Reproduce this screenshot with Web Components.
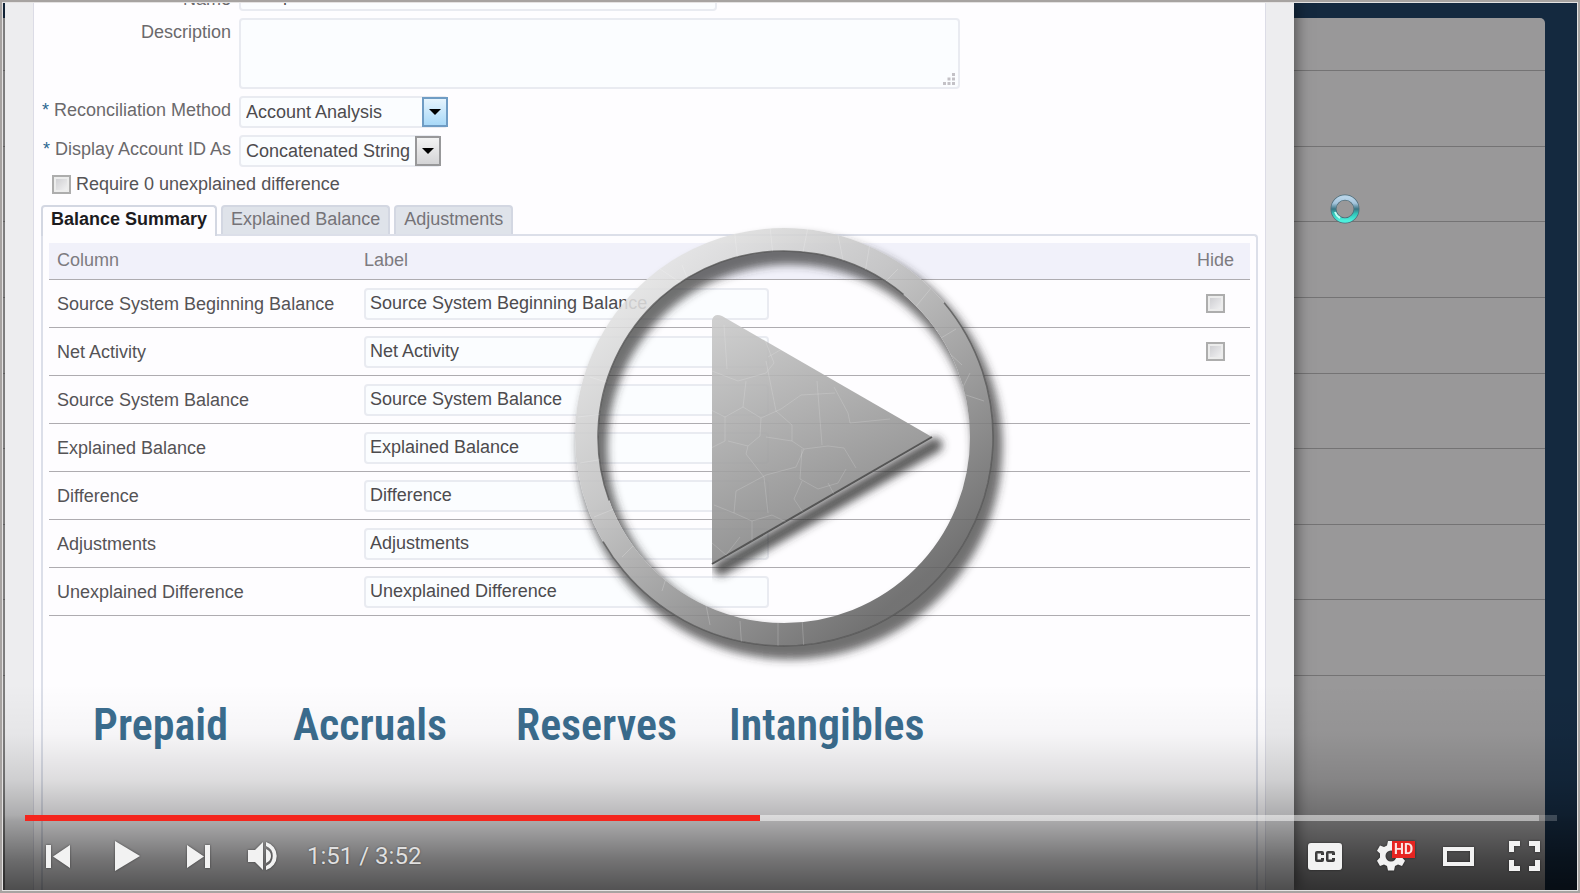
<!DOCTYPE html>
<html lang="en">
<head>
<meta charset="utf-8">
<title>Reconciliation formats</title>
<style>
	html,
	body {
		height: 100%;
		margin: 0;
	}
	body {
		font-family: "Liberation Sans", Arial, sans-serif;
		font-size: 18px;
		line-height: 20px;
		color: #555356;
	}
</style>
</head>
<body>
<video-player current="1:51" duration="3:52">
	<app-backdrop>
		<app-dialog>
			<format-form></format-form>
			<tab-panel tabs="Balance Summary|Explained Balance|Adjustments">
				<summary-table></summary-table>
				<caption-row>
					<span>Prepaid</span>
					<span>Accruals</span>
					<span>Reserves</span>
					<span>Intangibles</span>
				</caption-row>
			</tab-panel>
		</app-dialog>
	</app-backdrop>
</video-player>

<script>
const checkboxStyles = `
	input[type="checkbox"] {
		appearance: none;
		display: block;
		box-sizing: border-box;
		width: 19px;
		height: 19px;
		margin: 0;
		border: 2px solid #adadad;
		background: linear-gradient( 135deg, #c9c9cd, #f6f6f7 );
		box-shadow: inset 0 0 0 2px #ececec;
	}
`;

const fieldStyles = `
	input[type="text"],
	textarea,
	select {
		appearance: none;
		display: block;
		box-sizing: border-box;
		height: 32px;
		margin: 0;
		padding: 0 5px;
		border: 2px solid #e9ebf1;
		border-radius: 4px;
		background-color: #fbfdff;
		font: inherit;
		color: #4d4b4e;
		outline: 0;
	}
`;

class AppBackdrop extends HTMLElement {
	constructor() {
		super();
		this.attachShadow({ mode: "open" });
		this.shadowRoot.innerHTML = `
			<style>
				:host {
					display: grid;
					grid-template: minmax( 0, 1fr ) / minmax( 0, 1fr );
					height: 100%;
					overflow: hidden;
					background-color: #14293f;
				}
				.page,
				slot {
					grid-area: 1 / 1;
				}
				.page {
					margin: 15px 32px 0 0;
					border-radius: 0 5px 0 0;
					background-color: #999899;
				}
				.rows {
					display: grid;
					grid-template-rows: 53px repeat( 8, 1fr );
					height: 658px;
				}
				.rows div {
					border-bottom: 1px solid #747374;
				}
				slot {
					display: block;
					min-height: 0;
					margin: 0 283px 0 2px;
				}
				.busy {
					position: absolute;
					top: 191px;
					right: 217px;
					width: 32px;
					height: 32px;
				}
			</style>
			<div class="page"><div class="rows">${"<div></div>".repeat(9)}</div></div>
			<slot></slot>
			<svg class="busy" viewBox="0 0 32 32" fill="none">
				<defs>
					<linearGradient id="g" x1="0" y1="0" x2="0" y2="1">
						<stop offset="0" stop-color="#b8d4e8"/>
						<stop offset=".25" stop-color="#a5c4dc"/>
						<stop offset=".5" stop-color="#3a7484"/>
						<stop offset=".7" stop-color="#2fc4b8"/>
						<stop offset="1" stop-color="#4cf0dc"/>
					</linearGradient>
				</defs>
				<circle cx="16" cy="16" r="11.500" stroke="#4d6d7a" stroke-width="6"/>
				<circle cx="16" cy="16" r="11.500" stroke="url(#g)" stroke-width="4.500"/>
				<path d="M6 19a10.500 10.500 0 0 0 5 6" stroke="#c4fff4" stroke-width="2"/>
			</svg>
		`;
	}
}

class AppDialog extends HTMLElement {
	constructor() {
		super();
		this.attachShadow({ mode: "open" });
		this.shadowRoot.innerHTML = `
			<style>
				:host {
					display: block;
					box-sizing: border-box;
					height: 100%;
					padding: 0 28px;
					background-color: #ededef;
					box-shadow: 2px 0 14px rgba( 0,0,0,0.5 );
				}
				section {
					display: flex;
					flex-direction: column;
					box-sizing: border-box;
					height: 100%;
					padding: 0 7px;
					border: solid #dcdce6;
					border-width: 0 1px;
					background-color: #fefdff;
					overflow: hidden;
				}
			</style>
			<section><slot></slot></section>
		`;
	}
}

class FormatForm extends HTMLElement {
	constructor() {
		super();
		this.attachShadow({ mode: "open" });
		this.shadowRoot.innerHTML = `
			<style>
				${fieldStyles}
				${checkboxStyles}
				:host {
					display: block;
					flex: none;
					margin-top: -24px;
				}
				form {
					display: grid;
					grid-template-columns: 190px 1fr;
					gap: 7px 8px;
					justify-items: start;
				}
				form > label {
					justify-self: end;
					padding-top: 4px;
					color: #6b696c;
				}
				form > label:first-child {
					align-self: end;
					padding-bottom: 2px;
				}
				label b {
					color: #2c6790;
					font-weight: 400;
				}
				input[type="text"] {
					width: 478px;
				}
				.area,
				.combo {
					display: grid;
				}
				.area > *,
				.combo > * {
					grid-area: 1 / 1;
				}
				textarea {
					width: 721px;
					height: 71px;
					resize: none;
				}
				.area svg {
					place-self: end;
					width: 12px;
					height: 12px;
					margin: 0 5px 4px 0;
				}
				.combo span {
					display: grid;
					place-items: center;
					justify-self: end;
					box-sizing: border-box;
					width: 26px;
					margin: 1px 0;
					border: 2px solid #98989a;
					background: linear-gradient( #f3f3f3, #d4d4d6 );
					pointer-events: none;
				}
				.combo span::before {
					content: "";
					border: solid transparent;
					border-width: 6px 6px 0;
					border-top-color: #000;
				}
				.combo.hot span {
					border-color: #6f9cc4;
					background: linear-gradient( #e6f4fd, #a9d9f8 );
				}
				#method {
					width: 209px;
				}
				#display {
					width: 202px;
				}
				.check {
					grid-column: 1 / -1;
					display: flex;
					align-items: center;
					gap: 5px;
					padding-left: 11px;
				}
			</style>
			<form>
				<label for="name">Name</label>
				<input type="text" id="name" value="Sample">
				<label for="description">Description</label>
				<div class="area">
					<textarea id="description"></textarea>
					<svg viewBox="0 0 12 12" fill="#c3c1c6">
						<path d="M9 0h3v3H9zM9 4.500h3v3H9zM4.500 4.500h3v3h-3zM9 9h3v3H9zM4.500 9h3v3h-3zM0 9h3v3H0z"/>
					</svg>
				</div>
				<label for="method"><b>*</b> Reconciliation Method</label>
				<div class="combo hot">
					<select id="method"><option>Account Analysis</option></select>
					<span></span>
				</div>
				<label for="display"><b>*</b> Display Account ID As</label>
				<div class="combo">
					<select id="display"><option>Concatenated String</option></select>
					<span></span>
				</div>
				<div class="check">
					<input type="checkbox" id="require">
					<label for="require">Require 0 unexplained difference</label>
				</div>
			</form>
		`;
	}
}

class TabPanel extends HTMLElement {
	constructor() {
		super();
		this.attachShadow({ mode: "open" });
	}

	get tabs() {
		return this.getAttribute("tabs").split("|");
	}

	connectedCallback() {
		this.shadowRoot.innerHTML = `
			<style>
				:host {
					display: flex;
					flex-direction: column;
					flex: 1;
					min-height: 0;
					margin-top: 11px;
				}
				nav {
					display: flex;
					gap: 4px;
				}
				button {
					height: 29px;
					padding: 0 8px 4px;
					border: 2px solid #d3d7e2;
					border-bottom: 0;
					border-radius: 4px 4px 0 0;
					background-color: #dfe3ea;
					font: inherit;
					color: #757378;
				}
				button[aria-selected="true"] {
					z-index: 1;
					height: 31px;
					margin-bottom: -2px;
					padding-bottom: 6px;
					background-color: #fefdff;
					color: #1c1b1e;
					font-weight: 700;
				}
				.panel {
					flex: 1;
					padding: 7px 6px 0;
					border: 2px solid #dcdfe9;
					border-bottom: 0;
					border-radius: 0 4px 0 0;
				}
			</style>
			<nav role="tablist">
				${this.tabs.map((tab, i) => `<button role="tab" aria-selected="${i === 0}">${tab}</button>`).join("")}
			</nav>
			<div class="panel" role="tabpanel"><slot></slot></div>
		`;
	}
}

class SummaryTable extends HTMLElement {
	constructor() {
		super();
		this.attachShadow({ mode: "open" });

		const rows = [
			["Source System Beginning Balance", true],
			["Net Activity", true],
			["Source System Balance"],
			["Explained Balance"],
			["Difference"],
			["Adjustments"],
			["Unexplained Difference"],
		];

		this.shadowRoot.innerHTML = `
			<style>
				${fieldStyles}
				${checkboxStyles}
				:host {
					display: block;
				}
				table {
					width: 100%;
					border-spacing: 0;
					table-layout: fixed;
				}
				th,
				td {
					box-sizing: border-box;
					height: 48px;
					padding: 0 0 0 8px;
					border-bottom: 1px solid #aeacb0;
					text-align: left;
				}
				th {
					height: 37px;
					padding-bottom: 3px;
					background-color: #f1f1fa;
					font-weight: 400;
					color: #7d7b80;
				}
				th:first-child {
					width: 307px;
				}
				th:last-child {
					width: 66px;
					padding-right: 16px;
					text-align: right;
				}
				input[type="text"] {
					width: 405px;
					padding: 0 4px;
				}
				td:last-child {
					padding: 0 0 0 22px;
				}
			</style>
			<table>
				<thead>
					<tr><th>Column</th><th>Label</th><th>Hide</th></tr>
				</thead>
				<tbody>
					${rows.map(([name, hide]) => `
						<tr>
							<td>${name}</td>
							<td><input type="text" aria-label="${name} label" value="${name}"></td>
							<td>${hide ? `<input type="checkbox" aria-label="Hide ${name}">` : ""}</td>
						</tr>
					`).join("")}
				</tbody>
			</table>
		`;
	}
}

class CaptionRow extends HTMLElement {
	constructor() {
		super();
		this.attachShadow({ mode: "open" });
		this.shadowRoot.innerHTML = `
			<style>
				:host {
					display: grid;
					grid-template-columns: 200px 223px 213px auto;
					margin: 85px 0 0 44px;
					font: 600 44px/48px "Roboto Condensed", Roboto, sans-serif;
					color: #3b6d8f;
				}
			</style>
			<slot></slot>
		`;
	}
}

class PlayOverlay extends HTMLElement {
	constructor() {
		super();
		this.attachShadow({ mode: "open" });
		this.shadowRoot.innerHTML = `
			<style>
				:host {
					display: grid;
					place-items: center;
				}
				button {
					padding: 0;
					border: 0;
					background: none;
					cursor: pointer;
				}
				svg {
					display: block;
					width: 440px;
					height: 440px;
					overflow: visible;
				}
			</style>
			<button aria-label="Play video">
				<svg viewBox="0 0 440 440" fill="none">
					<defs>
						<linearGradient id="ring" x1=".15" y1=".1" x2=".8" y2=".9">
							<stop offset="0" stop-color="#e2e2e2"/>
							<stop offset=".35" stop-color="#c0c0c0"/>
							<stop offset="1" stop-color="#606060"/>
						</linearGradient>
						<linearGradient id="tri" gradientUnits="userSpaceOnUse" x1="145" y1="90" x2="245" y2="310">
							<stop offset="0" stop-color="#cbcbcb"/>
							<stop offset="1" stop-color="#858585"/>
						</linearGradient>
						<filter id="soft" filterUnits="userSpaceOnUse" x="-10" y="-10" width="460" height="460">
							<feGaussianBlur stdDeviation="4"/>
						</filter>
						<mask id="off-ring" maskUnits="userSpaceOnUse" x="-10" y="-10" width="460" height="460">
							<path fill="#fff" d="M-10-10h460v460H-10z"/>
							<circle cx="214" cy="210" r="197.500" stroke="#000" stroke-width="23"/>
						</mask>
						<mask id="off-tri" maskUnits="userSpaceOnUse" x="0" y="0" width="440" height="440">
							<path fill="#fff" d="M142 0h298v440H142z"/>
							<path fill="#000" d="M142 93q2-7 10-4l210 121-220 127z"/>
						</mask>
						<clipPath id="ring-clip">
							<path clip-rule="evenodd" d="M5 210a209 209 0 1 0 418 0a209 209 0 1 0-418 0M28 210a186 186 0 1 0 372 0a186 186 0 1 0-372 0"/>
						</clipPath>
						<clipPath id="tri-clip"><path d="M142 93q2-7 10-4l210 121-220 127z"/></clipPath>
					</defs>
					<g mask="url(#off-ring)">
						<circle cx="220" cy="220" r="197.500" stroke="#333" stroke-opacity=".7" stroke-width="30" filter="url(#soft)"/>
					</g>
					<circle cx="214" cy="210" r="197.500" stroke="url(#ring)" stroke-opacity=".88" stroke-width="23"/>
					<circle cx="214" cy="210" r="186" pathLength="360" stroke-dasharray="150 210" transform="rotate(160 214 210)" stroke="#555" stroke-opacity=".8" stroke-width="1.500"/>
					<circle cx="214" cy="210" r="209" pathLength="360" stroke-dasharray="190 170" transform="rotate(-40 214 210)" stroke="#555" stroke-opacity=".8" stroke-width="1.500"/>
					<g clip-path="url(#ring-clip)" stroke="#fff" stroke-opacity=".2">
						<path d="M164 0l4 36M200 0l3 28M238 0l-6 30M268 8l6 30M300 16l-6 36M112 38l12 30M90 42l30 20 40-14M328 42l-26 26M362 60l-28 34 34 10M386 102l-20 12 26 24M400 146l-10 20 24 8M20 150l32 10M8 190l34-4M10 236l36-6M24 290l30-12M52 330l30-30M92 364l10-32M140 398l-8-40M172 424l-2-30M208 424v-34M234 424l-2-34"/>
					</g>
					<g mask="url(#off-tri)">
						<path d="M151 341L365 218" stroke="#333" stroke-opacity=".8" stroke-width="15" stroke-linecap="round" filter="url(#soft)"/>
					</g>
					<path fill="url(#tri)" fill-opacity=".9" d="M142 93q2-7 10-4l210 121-220 127z"/>
					<path d="M142 337l220-127" stroke="#555" stroke-width="2"/>
					<g clip-path="url(#tri-clip)" stroke="#fff" stroke-opacity=".16">
						<path d="M154 98l3 44M142 144l26 10 28-8 8-10-14-36M198 130l14-8 20-20M196 134l10 50M176 154l-3 26-18 10-16-8M173 180l18 11 20-9 20-14 34-2M155 190v24l-20 10M191 191l-1 18-12 10-20-5M206 184l16 14v16l12 8 24-3 16 2 12 20M247 154l5 64M222 214l-26-4M234 222l-8 18-30 8-30 16-2 22-20-8M178 219l-2 8 18 23 4 36M232 222l-2 30 18 10 20-6 8-14M264 160l14 26 2 10 40-4M232 254l-8 18 16 24 12-6M258 256l12 22M164 286l18 8 20-6 24 12M182 294v26l14 12M142 316l14 12 14-18"/>
					</g>
				</svg>
			</button>
		`;
	}
}

class PlayerControls extends HTMLElement {
	constructor() {
		super();
		this.attachShadow({ mode: "open" });
	}

	connectedCallback() {
		this.shadowRoot.innerHTML = `
			<style>
				:host {
					display: block;
					padding-top: 131px;
					background: linear-gradient( rgba( 0,0,0,0 ), rgba( 0,0,0,0.03 ) 50px, rgba( 0,0,0,0.13 ) 96px, rgba( 0,0,0,0.27 ) 131px, rgba( 0,0,0,0.33 ) 137px, rgba( 0,0,0,0.54 ) 175px, rgba( 0,0,0,0.67 ) 205px );
				}
				input {
					appearance: none;
					display: block;
					width: calc( 100% - 42px );
					height: 6px;
					margin: 0 20px 0 22px;
					background: linear-gradient( 90deg, #f4251d 48%, rgba( 255,255,255,0.5 ) 48% 98.8%, rgba( 255,255,255,0.2 ) 98.8% );
				}
				input::-webkit-slider-thumb {
					appearance: none;
					width: 0;
				}
				.bar {
					display: flex;
					align-items: center;
					height: 69px;
					padding: 0 19px 0 20px;
				}
				button {
					width: 70px;
					height: 36px;
					padding: 0;
					border: 0;
					background: none;
				}
				.volume {
					width: 60px;
				}
				time {
					display: block;
					flex: 1;
					padding-left: 14px;
					font: 24px/28px Roboto, sans-serif;
					color: #e0e0e0;
					text-shadow: 0 0 2px rgba( 0,0,0,0.5 );
				}
				time ~ button {
					width: 67px;
				}
				svg {
					display: block;
					width: 48px;
					height: 36px;
					margin: auto;
					fill: #f2f2f2;
					filter: drop-shadow( 0 0 1px rgba( 0,0,0,0.5 ) );
				}
			</style>
			<input type="range" aria-label="Seek" value="48">
			<div class="bar">
				<button aria-label="Previous">
					<svg viewBox="0 0 48 36"><path d="M12 7h5v23h-5zM36 7v23L19 18.500z"/></svg>
				</button>
				<button aria-label="Play">
					<svg viewBox="0 0 48 36"><path d="M11 3l25 15-25 15z"/></svg>
				</button>
				<button aria-label="Next">
					<svg viewBox="0 0 48 36"><path d="M13 7v23l17-11.500zM31 7h5v23h-5z"/></svg>
				</button>
				<button class="volume" aria-label="Mute">
					<svg viewBox="0 0 48 36">
						<path d="M9 12h7l8-8v28l-8-8H9zM27 11q5 2 5 7T27 25z"/>
						<path d="M27 4a14.500 14.500 0 0 1 0 28v-4a10.800 10.800 0 0 0 0-20z"/>
					</svg>
				</button>
				<time>${this.getAttribute("current")} / ${this.getAttribute("duration")}</time>
				<button aria-label="Subtitles">
					<svg viewBox="0 0 48 36">
						<path fill-rule="evenodd" d="M10 5h29q3 0 3 3v21q0 3-3 3H11q-3 0-3-3V8q0-3 3-3zM17 13q-2 0-2 2v7q0 2 2 2h5q2 0 2-2v-2h-3v1.500h-3.500v-6H21V17h3v-2q0-2-2-2zM28 13q-2 0-2 2v7q0 2 2 2h5q2 0 2-2v-2h-3v1.500h-3.500v-6H32V17h3v-2q0-2-2-2z"/>
					</svg>
				</button>
				<button aria-label="Settings">
					<svg viewBox="0 0 48 36">
						<path fill-rule="evenodd" d="M21 3h6l1 4.500 3 1.500 4-1.500 3 5.200-3 2.800v4l3 3.300-3 5.200-4-1.500-3 1.500-1 4.500h-6l-1-4.500-3-1.500-4 1.500-3-5.200 3-3.300v-4l-3-2.800 3-5.200 4 1.500 3-1.500zM24 12.500a5.500 5.500 0 1 0 0 11a5.500 5.500 0 1 0 0-11"/>
						<path fill="#e62420" d="M25 3h23v17H25z"/>
						<text x="27" y="16" font-family="Roboto" font-size="14" font-weight="700" fill="#fbe4e2">HD</text>
					</svg>
				</button>
				<button aria-label="Theater mode">
					<svg viewBox="0 0 48 36"><path fill-rule="evenodd" d="M9 9h31v19H9zM13 13v11h23V13z"/></svg>
				</button>
				<button aria-label="Full screen">
					<svg viewBox="0 0 48 36">
						<path d="M8 3h11v5h-6v6H8zM28 3h11v11h-5V8h-6zM8 22h5v6h6v5H8zM34 22h5v11H28v-5h6z"/>
					</svg>
				</button>
			</div>
		`;
	}
}

class VideoPlayer extends HTMLElement {
	constructor() {
		super();
		this.attachShadow({ mode: "open" });
	}

	connectedCallback() {
		this.shadowRoot.innerHTML = `
			<style>
				:host {
					display: block;
					box-sizing: border-box;
					position: relative;
					height: 100vh;
					padding: 1px;
					border: 2px solid #a7a3a1;
					background-color: #e4e2e2;
					overflow: hidden;
				}
				play-overlay {
					position: absolute;
					inset: 0;
				}
				player-controls {
					position: absolute;
					inset: auto 1px 1px;
				}
			</style>
			<slot></slot>
			<play-overlay></play-overlay>
			<player-controls current="${this.getAttribute("current")}" duration="${this.getAttribute("duration")}"></player-controls>
		`;
	}
}

window.customElements.define("app-backdrop", AppBackdrop);
window.customElements.define("app-dialog", AppDialog);
window.customElements.define("format-form", FormatForm);
window.customElements.define("tab-panel", TabPanel);
window.customElements.define("summary-table", SummaryTable);
window.customElements.define("caption-row", CaptionRow);
window.customElements.define("play-overlay", PlayOverlay);
window.customElements.define("player-controls", PlayerControls);
window.customElements.define("video-player", VideoPlayer);
</script>
</body>
</html>
